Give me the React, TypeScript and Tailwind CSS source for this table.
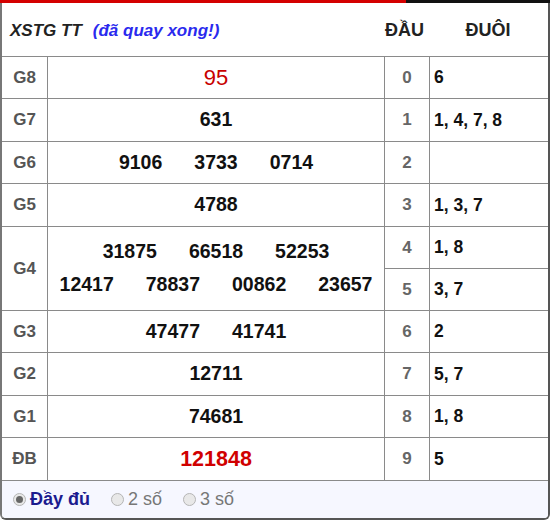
import React from "react";

const rows: { dau: string; duoi: string }[] = [
  { dau: "0", duoi: "6" },
  { dau: "1", duoi: "1, 4, 7, 8" },
  { dau: "2", duoi: "" },
  { dau: "3", duoi: "1, 3, 7" },
  { dau: "4", duoi: "1, 8" },
  { dau: "5", duoi: "3, 7" },
  { dau: "6", duoi: "2" },
  { dau: "7", duoi: "5, 7" },
  { dau: "8", duoi: "1, 8" },
  { dau: "9", duoi: "5" },
];

function Label({ children, span }: { children: React.ReactNode; span?: boolean }) {
  return (
    <div
      className={
        "bg-white flex items-center justify-center text-[17px] font-bold text-[#555] " +
        (span ? "row-span-2" : "")
      }
    >
      {children}
    </div>
  );
}

function Nums({ children, span }: { children: React.ReactNode; span?: boolean }) {
  return (
    <div
      className={
        "bg-white flex items-center justify-center gap-[32px] text-[19.5px] font-bold text-[#111] " +
        (span ? "row-span-2" : "")
      }
    >
      {children}
    </div>
  );
}

function Dau({ d }: { d: string }) {
  return (
    <div className="bg-white flex items-center justify-center text-[17px] font-bold text-[#666]">{d}</div>
  );
}
function Duoi({ d }: { d: string }) {
  return <div className="bg-white flex items-center pl-[4px] text-[17.5px] font-bold text-[#111]">{d}</div>;
}

function Radio({ on }: { on?: boolean }) {
  return (
    <span className="w-[13px] h-[13px] rounded-full border border-[#b5b5b5] bg-[#e8e8e8] flex items-center justify-center">
      {on && <span className="w-[7px] h-[7px] rounded-full bg-[#666]" />}
    </span>
  );
}

export default function App() {
  return (
    <div className="w-[550px] h-[521px] bg-white" style={{ fontFamily: '"Liberation Sans", Arial, sans-serif' }}>
      <div className="flex h-[3px]">
        <div className="w-[406px] bg-[#d40000]" />
        <div className="flex-1 bg-[#111]" />
      </div>
      <div className="border-l-2 border-l-[#777] border-r-2 border-r-[#555] border-b-2 border-b-[#555] rounded-b-[6px] overflow-hidden">
        <div className="h-[53px] grid grid-cols-[45px_337px_45px_118px] items-center">
          <div className="col-span-2 flex items-baseline pl-[8px] pt-[2px] italic font-bold">
            <span className="text-[17px] text-[#222]">XSTG TT</span>
            <span className="text-[17px] text-[#2a2aee] ml-[11px]">(đã quay xong!)</span>
          </div>
          <div className="text-center text-[18px] font-bold text-[#222] pt-[2px] pr-[4px]">ĐẦU</div>
          <div className="text-center text-[18px] font-bold text-[#222] pt-[2px]">ĐUÔI</div>
        </div>
        <div className="grid grid-cols-[45px_336px_44px_118px] grid-rows-[41px_42px_41px_42px_41px_41px_41px_42px_41px_42px] gap-px bg-[#8a8a8a] py-px">
          <Label>G8</Label>
          <div className="bg-white flex items-center justify-center text-[22px] text-[#c80000]">95</div>
          <Dau d={rows[0].dau} />
          <Duoi d={rows[0].duoi} />

          <Label>G7</Label>
          <Nums>631</Nums>
          <Dau d={rows[1].dau} />
          <Duoi d={rows[1].duoi} />

          <Label>G6</Label>
          <Nums>
            <span>9106</span>
            <span>3733</span>
            <span>0714</span>
          </Nums>
          <Dau d={rows[2].dau} />
          <Duoi d={rows[2].duoi} />

          <Label>G5</Label>
          <Nums>4788</Nums>
          <Dau d={rows[3].dau} />
          <Duoi d={rows[3].duoi} />

          <Label span>G4</Label>
          <div className="row-span-2 bg-white flex flex-col items-center justify-center gap-[11px] text-[19.5px] font-bold text-[#111] leading-[22px] pb-[2px]">
            <div className="flex gap-[32px]">
              <span>31875</span>
              <span>66518</span>
              <span>52253</span>
            </div>
            <div className="flex gap-[32px]">
              <span>12417</span>
              <span>78837</span>
              <span>00862</span>
              <span>23657</span>
            </div>
          </div>
          <Dau d={rows[4].dau} />
          <Duoi d={rows[4].duoi} />
          <Dau d={rows[5].dau} />
          <Duoi d={rows[5].duoi} />

          <Label>G3</Label>
          <Nums>
            <span>47477</span>
            <span>41741</span>
          </Nums>
          <Dau d={rows[6].dau} />
          <Duoi d={rows[6].duoi} />

          <Label>G2</Label>
          <Nums>12711</Nums>
          <Dau d={rows[7].dau} />
          <Duoi d={rows[7].duoi} />

          <Label>G1</Label>
          <Nums>74681</Nums>
          <Dau d={rows[8].dau} />
          <Duoi d={rows[8].duoi} />

          <Label>ĐB</Label>
          <div className="bg-white flex items-center justify-center text-[21.5px] font-bold text-[#d00000]">121848</div>
          <Dau d={rows[9].dau} />
          <Duoi d={rows[9].duoi} />
        </div>
        <div className="h-[37px] bg-[#f6f7ff] flex items-center pl-[11px] text-[18px]">
          <Radio on />
          <span className="ml-[4px] font-bold text-[#1b1b8f]">Đầy đủ</span>
          <span className="ml-[21px]">
            <Radio />
          </span>
          <span className="ml-[4px] text-[#777]">2 số</span>
          <span className="ml-[21px]">
            <Radio />
          </span>
          <span className="ml-[4px] text-[#777]">3 số</span>
        </div>
      </div>
    </div>
  );
}
